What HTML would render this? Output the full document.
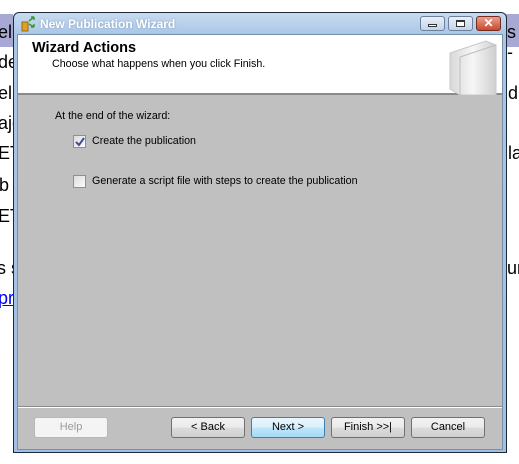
<!DOCTYPE html>
<html><head><style>
*{margin:0;padding:0;box-sizing:border-box}
body{width:519px;height:464px;background:#fff;position:relative;overflow:hidden;font-family:"Liberation Sans",Arial,sans-serif}
.t{position:absolute;font-size:18px;line-height:20px;color:#000}
.hl{position:absolute;background:#a8a8d4}
.win{position:absolute;left:13px;top:12px;width:494px;height:441px;border:1px solid #1e2a3a;border-radius:6px 6px 0 0;background:linear-gradient(#c8dcf0,#a9c6e6 22px,#9fc0e4);}
.title{position:absolute;left:26px;top:4px;color:#fff;font-weight:bold;font-size:12px;text-shadow:0 0 2px #7c98bd}
.client{position:absolute;left:3px;top:21px;width:486px;height:416px;background:#c0c0c0;border:1px solid #7b8fa8}
.hdr{position:absolute;left:0;top:0;width:484px;height:60px;background:#fff;border-bottom:2px solid #8a8a8a}
.btn{position:absolute;top:382px;height:21px;width:74px;border:1px solid #707070;border-radius:3px;background:linear-gradient(#f2f2f2,#ebebeb 50%,#dcdcdc 51%,#cfcfcf);font-size:11px;text-align:center;line-height:19px;color:#000}
.cb{position:absolute;width:13px;height:13px;border:1px solid #8e8f8f;background:linear-gradient(135deg,#dcdcdc,#fbfbfb)}
.s{font-size:10.7px;position:absolute;color:#000}
.wb{position:absolute;top:3px;height:15px;border:1px solid #6d7f99;border-radius:3px;background:linear-gradient(#e8f0fa,#c2d4ea)}
</style></head><body>
<div class="hl" style="left:0;top:14px;width:13px;height:33px"></div>
<div class="hl" style="left:506px;top:14px;width:13px;height:33px"></div>
<div class="t" style="left:-2px;top:22px">el</div>
<div class="t" style="left:-2px;top:52px">de</div>
<div class="t" style="left:-2px;top:83px">el</div>
<div class="t" style="left:-2px;top:113px">ajo</div>
<div class="t" style="left:-2px;top:143px">ET</div>
<div class="t" style="left:-1px;top:175px">b</div>
<div class="t" style="left:-2px;top:206px">ET</div>
<div class="t" style="left:-3px;top:258px">s s</div>
<div class="t" style="left:-2px;top:288px;color:#0000ee;text-decoration:underline">pr</div>
<div class="t" style="left:507px;top:22px">s -</div>
<div class="t" style="left:508px;top:83px">d</div>
<div class="t" style="left:508px;top:143px">la</div>
<div class="t" style="left:507px;top:258px">ur</div>
<div class="win">
 <svg style="position:absolute;left:7px;top:3px" width="16" height="16"><rect x="1" y="6" width="6" height="9" fill="#e0a020" stroke="#9a6a10"/><path d="M8 5l5-4M13 1v3M13 1h-3M8 8l5 3M13 11v-3M13 11h-3" stroke="#3a9a30" stroke-width="1.5" fill="none"/></svg>
 <div class="title">New Publication Wizard</div>
 <div class="wb" style="left:406px;width:25px"><div style="position:absolute;left:7px;top:7px;width:9px;height:3px;border:1px solid #333;background:#fff"></div></div>
 <div class="wb" style="left:434px;width:25px"><div style="position:absolute;left:7px;top:3px;width:9px;height:7px;border:1px solid #333;border-top-width:2px;background:#fff"></div></div>
 <div class="wb" style="left:462px;width:25px;background:linear-gradient(#e8a090,#c44a30);border-color:#7a2a1a;color:#fff;font-weight:bold;font-size:12px;text-align:center;line-height:13px">✕</div>
 <div class="client">
  <div class="hdr">
   <div style="position:absolute;left:14px;top:5px;font-weight:bold;font-size:14.5px">Wizard Actions</div>
   <div class="s" style="left:34px;top:23px">Choose what happens when you click Finish.</div>
   <svg style="position:absolute;left:428px;top:4px" width="54" height="56"><defs><linearGradient id="g" x1="0" x2="1"><stop offset="0" stop-color="#d8d8d8"/><stop offset=".5" stop-color="#f6f6f6"/><stop offset="1" stop-color="#cfcfcf"/></linearGradient></defs><path d="M4 14L40 2 50 6 50 56 14 56 4 50z" fill="url(#g)" stroke="#c8c8c8"/><path d="M14 18L50 6M14 18V56" stroke="#bdbdbd" fill="none"/></svg>
  </div>
  <div class="s" style="left:37px;top:75px">At the end of the wizard:</div>
  <div class="cb" style="left:55px;top:100px"></div>
  <svg style="position:absolute;left:57px;top:102px" width="10" height="10"><path d="M1 5l3 3 5-7" stroke="#3c4ea0" stroke-width="2" fill="none"/></svg>
  <div class="s" style="left:74px;top:100px">Create the publication</div>
  <div class="cb" style="left:55px;top:140px"></div>
  <div class="s" style="left:74px;top:140px">Generate a script file with steps to create the publication</div>
  <div style="position:absolute;left:0;top:371px;width:484px;height:2px;border-top:1px solid #8a8a8a;border-bottom:1px solid #fff"></div>
  <div class="btn" style="left:16px;color:#9a9a9a;border-color:#b8b8b8;background:#f4f4f4">Help</div>
  <div class="btn" style="left:153px">&lt; Back</div>
  <div class="btn" style="left:233px;border-color:#3c7fb1;background:linear-gradient(#eaf6fd,#d9f0fc 50%,#bee6fd 51%,#a7d9f5)">Next &gt;</div>
  <div class="btn" style="left:313px">Finish &gt;&gt;|</div>
  <div class="btn" style="left:393px">Cancel</div>
 </div>
</div>
</body></html>
